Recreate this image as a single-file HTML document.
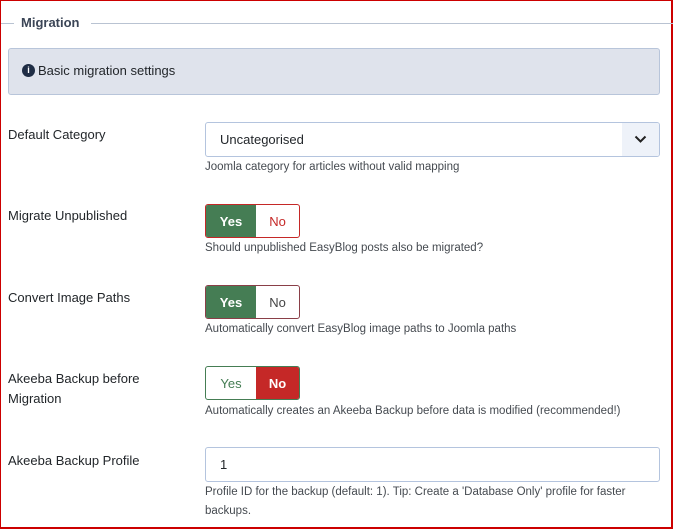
<!DOCTYPE html>
<html><head><style>
*{box-sizing:border-box;margin:0;padding:0}
body{width:674px;height:530px;overflow:hidden;background:#fff;font-family:"Liberation Sans",sans-serif;color:#22262a;position:relative}
.frame{position:absolute;left:0;top:0;width:673px;height:529px;border:1px solid #c00;border-right-width:2px;border-bottom-width:2px}
.a{position:absolute}
.lbl{font-size:13px;color:#22262a;line-height:20px}
.help{font-size:11.5px;color:#454a50;line-height:19px}
.sw{position:absolute;width:95px;height:34px;border-radius:3px;display:flex;overflow:hidden;font-size:13px}
.sw div{display:flex;align-items:center;justify-content:center}
.y{width:50px}.n{flex:1}
</style></head><body>
<div class="frame"></div>
<div class="a" style="left:1px;top:23px;width:13px;height:1px;background:#b9c3d2"></div>
<div class="a" style="left:91px;top:23px;width:582px;height:1px;background:#b9c3d2"></div>
<div class="a" style="left:21px;top:14px;font-size:13px;font-weight:bold;color:#3b4556;line-height:18px">Migration</div>
<div class="a" style="left:8px;top:48px;width:652px;height:47px;background:#dfe3ec;border:1px solid #b8c5da;border-radius:3px"></div>
<div class="a" style="left:22px;top:64px;width:13px;height:13px;border-radius:50%;background:#1f2d45;color:#fff;font-size:9px;font-weight:bold;text-align:center;line-height:13px">i</div>
<div class="a" style="left:38px;top:62px;font-size:13px;line-height:18px;color:#22262a">Basic migration settings</div>

<div class="a lbl" style="left:8px;top:125px">Default Category</div>
<div class="a" style="left:205px;top:122px;width:455px;height:35px;border:1px solid #b4c4de;border-radius:3px;background:#fff;overflow:hidden">
 <div class="a" style="left:14px;top:8px;font-size:13px;line-height:18px">Uncategorised</div>
 <div class="a" style="right:0;top:0;width:37px;height:33px;background:#eef2f9"></div>
 <svg class="a" style="right:12px;top:11px" width="13" height="10" viewBox="0 0 13 10"><path d="M1.5 2.5 L6.5 7.5 L11.5 2.5" fill="none" stroke="#222" stroke-width="2"/></svg>
</div>
<div class="a help" style="left:205px;top:158px">Joomla category for articles without valid mapping</div>

<div class="a lbl" style="left:8px;top:206px">Migrate Unpublished</div>
<div class="sw" style="left:205px;top:204px;border:1px solid #c52827"><div class="y" style="background:#457d54;color:#fff;font-weight:bold">Yes</div><div class="n" style="color:#c52827">No</div></div>
<div class="a help" style="left:205px;top:239px">Should unpublished EasyBlog posts also be migrated?</div>

<div class="a lbl" style="left:8px;top:288px">Convert Image Paths</div>
<div class="sw" style="left:205px;top:285px;border:1px solid #8a3f48"><div class="y" style="background:#457d54;color:#fff;font-weight:bold">Yes</div><div class="n" style="color:#444">No</div></div>
<div class="a help" style="left:205px;top:320px">Automatically convert EasyBlog image paths to Joomla paths</div>

<div class="a lbl" style="left:8px;top:369px;width:150px">Akeeba Backup before<br>Migration</div>
<div class="sw" style="left:205px;top:366px;border:1px solid #457d54"><div class="y" style="color:#457d54">Yes</div><div class="n" style="background:#c52827;color:#fff;font-weight:bold">No</div></div>
<div class="a help" style="left:205px;top:402px">Automatically creates an Akeeba Backup before data is modified (recommended!)</div>

<div class="a lbl" style="left:8px;top:451px">Akeeba Backup Profile</div>
<div class="a" style="left:205px;top:447px;width:455px;height:35px;border:1px solid #b4c4de;border-radius:3px"><div class="a" style="left:14px;top:8px;font-size:13px;line-height:18px">1</div></div>
<div class="a help" style="left:205px;top:483px;width:440px">Profile ID for the backup (default: 1). Tip: Create a 'Database Only' profile for faster backups.</div>
</body></html>
